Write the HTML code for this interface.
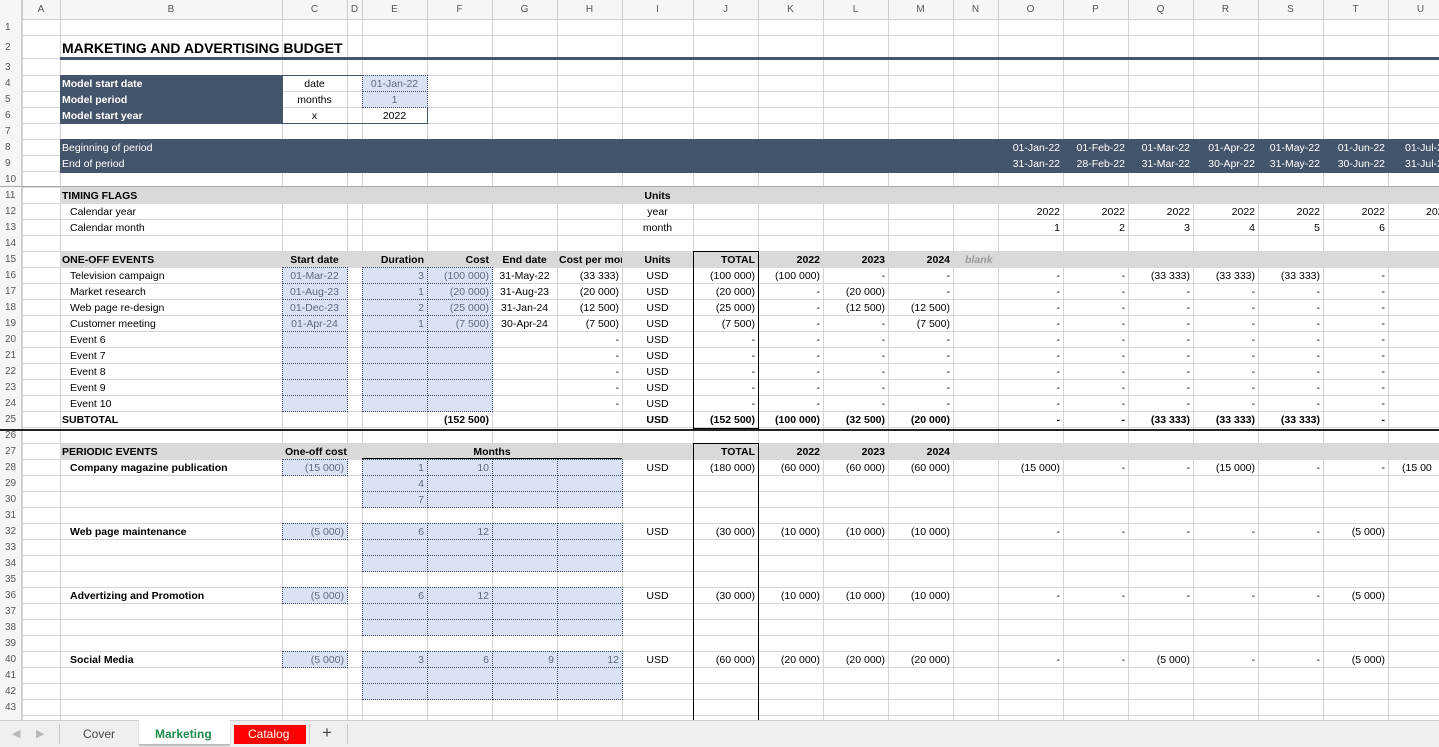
<!DOCTYPE html>
<html><head><meta charset="utf-8">
<style>
body{margin:0;width:1439px;height:747px;overflow:hidden;background:#fff;font-family:"Liberation Sans",Arial,sans-serif;font-size:10.5px;color:#000;position:relative}
#g{position:absolute;left:0;top:0;width:1439px;height:720px;overflow:hidden}
.c{position:absolute;white-space:nowrap;overflow:hidden;box-sizing:border-box;line-height:16px;padding:0 3px}
.r{text-align:right}.m{text-align:center}.b{font-weight:bold}
.bx{position:absolute;box-sizing:border-box}
.inp{position:absolute;box-sizing:border-box;background:#dae3f3;border:1px dotted #3a4560}
.hl{position:absolute;background:#d4d4d4;height:1px}
.vl{position:absolute;background:#d4d4d4;width:1px}
#tabs{position:absolute;left:0;top:720px;width:1439px;height:27px;background:#efefef;border-top:1px solid #cfcfcf;box-sizing:border-box;font-size:12px}
</style></head><body>
<div id="g"></div>
<div id="tabs">
<span style="position:absolute;left:12px;top:6px;color:#b8b8b8;font-size:11px">&#9664;</span>
<span style="position:absolute;left:36px;top:6px;color:#b8b8b8;font-size:11px">&#9654;</span>
<div style="position:absolute;left:59px;top:3px;width:1px;height:20px;background:#ccc"></div>
<span style="position:absolute;left:83px;top:6px;color:#444">Cover</span>
<div style="position:absolute;left:139px;top:-1px;width:91px;height:24px;background:#fff;border-bottom:1px solid #bbb;box-shadow:0 1px 1px #bbb"></div>
<span style="position:absolute;left:155px;top:6px;color:#1e8a4c;font-weight:bold">Marketing</span>
<div style="position:absolute;left:234px;top:4px;width:72px;height:19px;background:#ff0000"></div>
<span style="position:absolute;left:248px;top:6px;color:#fff">Catalog</span>
<div style="position:absolute;left:309px;top:3px;width:1px;height:20px;background:#ccc"></div>
<span style="position:absolute;left:322px;top:2px;color:#444;font-size:17px">+</span>
<div style="position:absolute;left:347px;top:3px;width:1px;height:20px;background:#ccc"></div>
</div>
<script>
var X=[0,22,60,282,347,362,427,492,557,622,693,758,823,888,953,998,1063,1128,1193,1258,1323,1388,1453];
var L="ABCDEFGHIJKLMNOPQRSTU";
function RT(n){if(n==0)return 0;if(n==1)return 20;if(n==2)return 36;if(n==3)return 59;return 76+(n-4)*16;}
function RH(n){return RT(n+1)-RT(n);}
var g=document.getElementById('g'),h='';
function ci(c){return L.indexOf(c)+1;}
function add(s){h+=s;}
for(var i=1;i<X.length;i++)add('<div class="vl" style="left:'+X[i]+'px;top:0;height:720px"></div>');
for(var r=1;r<=44;r++)add('<div class="hl" style="left:0;top:'+(RT(r)-1)+'px;width:1439px"></div>');
add('<div class="bx" style="left:0;top:0;width:1439px;height:20px;background:#f6f6f6;border-bottom:1px solid #ccc"></div>');
add('<div class="bx" style="left:0;top:0;width:22px;height:720px;background:#f6f6f6;border-right:1px solid #ccc"></div>');
for(var i=0;i<21;i++){add('<div class="c m" style="left:'+X[i+1]+'px;top:2px;width:'+(X[i+2]-X[i+1])+'px;color:#555;font-size:10px">'+L[i]+'</div>');add('<div class="vl" style="left:'+X[i+1]+'px;top:0;height:20px;background:#ccc"></div>');}
for(var r=1;r<=43;r++)add('<div class="c" style="left:0;top:'+(RT(r)+(RH(r)-16)/2)+'px;width:22px;color:#555;font-size:10px;padding-left:5px">'+r+'</div>');
function band(r,bg,x0){add('<div class="bx" style="left:'+(x0||60)+'px;top:'+(RT(r)-1)+'px;width:1400px;height:'+(RH(r)+1)+'px;background:'+bg+'"></div>');}
function inp(c1,r1,c2,r2){add('<div class="inp" style="left:'+X[ci(c1)]+'px;top:'+(RT(r1)-1)+'px;width:'+(X[ci(c2)+1]-X[ci(c1)]+1)+'px;height:'+(RT(r2+1)-RT(r1)+1)+'px"></div>');}
function cell(c,r,t,cls,st){var i=ci(c);add('<div class="c '+(cls||'')+'" style="left:'+X[i]+'px;top:'+(RT(r)+(RH(r)-16)/2)+'px;width:'+(X[i+1]-X[i])+'px;'+(st||'')+'">'+t+'</div>');}
var IC='color:#5c6a82;';
cell('B',2,'MARKETING AND ADVERTISING BUDGET','b','font-size:14px;width:300px;padding-left:2px');
add('<div class="bx" style="left:60px;top:57px;width:1400px;height:3px;background:#44546a"></div>');
add('<div class="bx" style="left:60px;top:75px;width:222px;height:49px;background:#44546a"></div>');
add('<div class="bx" style="left:282px;top:75px;width:146px;height:49px;border:1px solid #44546a"></div>');
inp('E',4,'E',4);inp('E',5,'E',5);
[['Model start date','date','01-Jan-22'],['Model period','months','1'],['Model start year','x','2022']].forEach(function(a,k){cell('B',4+k,a[0],'b','color:#fff;padding-left:2px');cell('C',4+k,a[1],'m');cell('E',4+k,a[2],'m',k<2?IC:'');});
band(8,'#44546a');add('<div class="bx" style="left:60px;top:155px;width:1400px;height:18px;background:#44546a"></div>');
cell('B',8,'Beginning of period','','color:#fff;padding-left:2px');cell('B',9,'End of period','','color:#fff;padding-left:2px');
var cols='OPQRSTU'.split('');
var b8=['01-Jan-22','01-Feb-22','01-Mar-22','01-Apr-22','01-May-22','01-Jun-22','01-Jul-22'],e9=['31-Jan-22','28-Feb-22','31-Mar-22','30-Apr-22','31-May-22','30-Jun-22','31-Jul-22'];
cols.forEach(function(c,k){var s='color:#fff;'+(k==6?'text-align:left;padding-left:17px':'');cell(c,8,b8[k],'r',s);cell(c,9,e9[k],'r',s);});
band(11,'#d9d9d9');add('<div class="bx" style="left:0;top:186px;width:1439px;height:1px;background:#aaa"></div>');
cell('B',11,'TIMING FLAGS','b','padding-left:2px');cell('I',11,'Units','b m');
cell('B',12,'Calendar year','','padding-left:10px');cell('I',12,'year','m');
cell('B',13,'Calendar month','','padding-left:10px');cell('I',13,'month','m');
cols.forEach(function(c,k){if(k<6){cell(c,12,'2022','r');cell(c,13,String(k+1),'r');}else cell(c,12,'2022','','padding-left:38px');});
band(15,'#d9d9d9');
cell('B',15,'ONE-OFF EVENTS','b','padding-left:2px');cell('C',15,'Start date','b m');cell('E',15,'Duration','b r');cell('F',15,'Cost','b r');cell('G',15,'End date','b m');cell('H',15,'Cost per mor','b','padding-left:2px');cell('I',15,'Units','b m');
cell('J',15,'TOTAL','b r');cell('K',15,'2022','b r');cell('L',15,'2023','b r');cell('M',15,'2024','b r');cell('N',15,'blank','b','font-style:italic;color:#999;padding-left:12px');
for(var r=16;r<=24;r++){inp('C',r,'C',r);inp('E',r,'E',r);inp('F',r,'F',r);}
var ev=[['Television campaign','01-Mar-22','3','(100 000)','31-May-22','(33 333)','(100 000)','(100 000)','-','-',['-','-','(33 333)','(33 333)','(33 333)','-']],
['Market research','01-Aug-23','1','(20 000)','31-Aug-23','(20 000)','(20 000)','-','(20 000)','-'],
['Web page re-design','01-Dec-23','2','(25 000)','31-Jan-24','(12 500)','(25 000)','-','(12 500)','(12 500)'],
['Customer meeting','01-Apr-24','1','(7 500)','30-Apr-24','(7 500)','(7 500)','-','-','(7 500)'],
['Event 6','','','','','-','-','-','-','-'],['Event 7','','','','','-','-','-','-','-'],['Event 8','','','','','-','-','-','-','-'],['Event 9','','','','','-','-','-','-','-'],['Event 10','','','','','-','-','-','-','-']];
ev.forEach(function(a,k){var r=16+k;cell('B',r,a[0],'','padding-left:10px');cell('C',r,a[1],'m',IC);cell('E',r,a[2],'r',IC);cell('F',r,a[3],'r',IC);cell('G',r,a[4],'m');cell('H',r,a[5],'r');cell('I',r,'USD','m');cell('J',r,a[6],'r');cell('K',r,a[7],'r');cell('L',r,a[8],'r');cell('M',r,a[9],'r');
var o=a[10]||['-','-','-','-','-','-'];o.forEach(function(v,j){cell(cols[j],r,v,'r');});});
cell('B',25,'SUBTOTAL','b','padding-left:2px');cell('F',25,'(152 500)','b r');cell('I',25,'USD','b m');cell('J',25,'(152 500)','b r');cell('K',25,'(100 000)','b r');cell('L',25,'(32 500)','b r');cell('M',25,'(20 000)','b r');
['-','-','(33 333)','(33 333)','(33 333)','-'].forEach(function(v,j){cell(cols[j],25,v,'b r');});
add('<div class="bx" style="left:0;top:429px;width:1439px;height:2px;background:#222"></div>');
add('<div class="bx" style="left:693px;top:251px;width:66px;height:178px;border:1px solid #000"></div>');
band(27,'#d9d9d9');
cell('B',27,'PERIODIC EVENTS','b','padding-left:2px');cell('C',27,'One-off cost','b m');
add('<div class="c b m" style="left:362px;top:'+RT(27)+'px;width:260px">Months</div>');
add('<div class="bx" style="left:362px;top:'+(RT(28)-2)+'px;width:260px;height:1px;background:#000"></div>');
cell('J',27,'TOTAL','b r');cell('K',27,'2022','b r');cell('L',27,'2023','b r');cell('M',27,'2024','b r');
add('<div class="bx" style="left:693px;top:443px;width:66px;height:290px;border:1px solid #000"></div>');
var pe=[[28,'Company magazine publication','(15 000)',[['1','10','',''],['4','','',''],['7','','','']],'(180 000)','(60 000)',['(15 000)','-','-','(15 000)','-','-','(15 00']],
[32,'Web page maintenance','(5 000)',[['6','12','','']],'(30 000)','(10 000)',['-','-','-','-','-','(5 000)']],
[36,'Advertizing and Promotion','(5 000)',[['6','12','','']],'(30 000)','(10 000)',['-','-','-','-','-','(5 000)']],
[40,'Social Media','(5 000)',[['3','6','9','12']],'(60 000)','(20 000)',['-','-','(5 000)','-','-','(5 000)']]];
pe.forEach(function(p){var r=p[0];cell('B',r,p[1],'b','padding-left:10px');inp('C',r,'C',r);cell('C',r,p[2],'r',IC);
for(var k=0;k<3;k++){'EFGH'.split('').forEach(function(c){inp(c,r+k,c,r+k);});}
p[3].forEach(function(row,k){row.forEach(function(v,j){if(v)cell('EFGH'[j],r+k,v,'r',IC);});});
cell('I',r,'USD','m');cell('J',r,p[4],'r');cell('K',r,p[5],'r');cell('L',r,p[5],'r');cell('M',r,p[5],'r');
p[6].forEach(function(v,j){cell(cols[j],r,v,j==6?'':'r',j==6?'padding-left:14px':'');});});
g.innerHTML=h;
</script>
</body></html>
